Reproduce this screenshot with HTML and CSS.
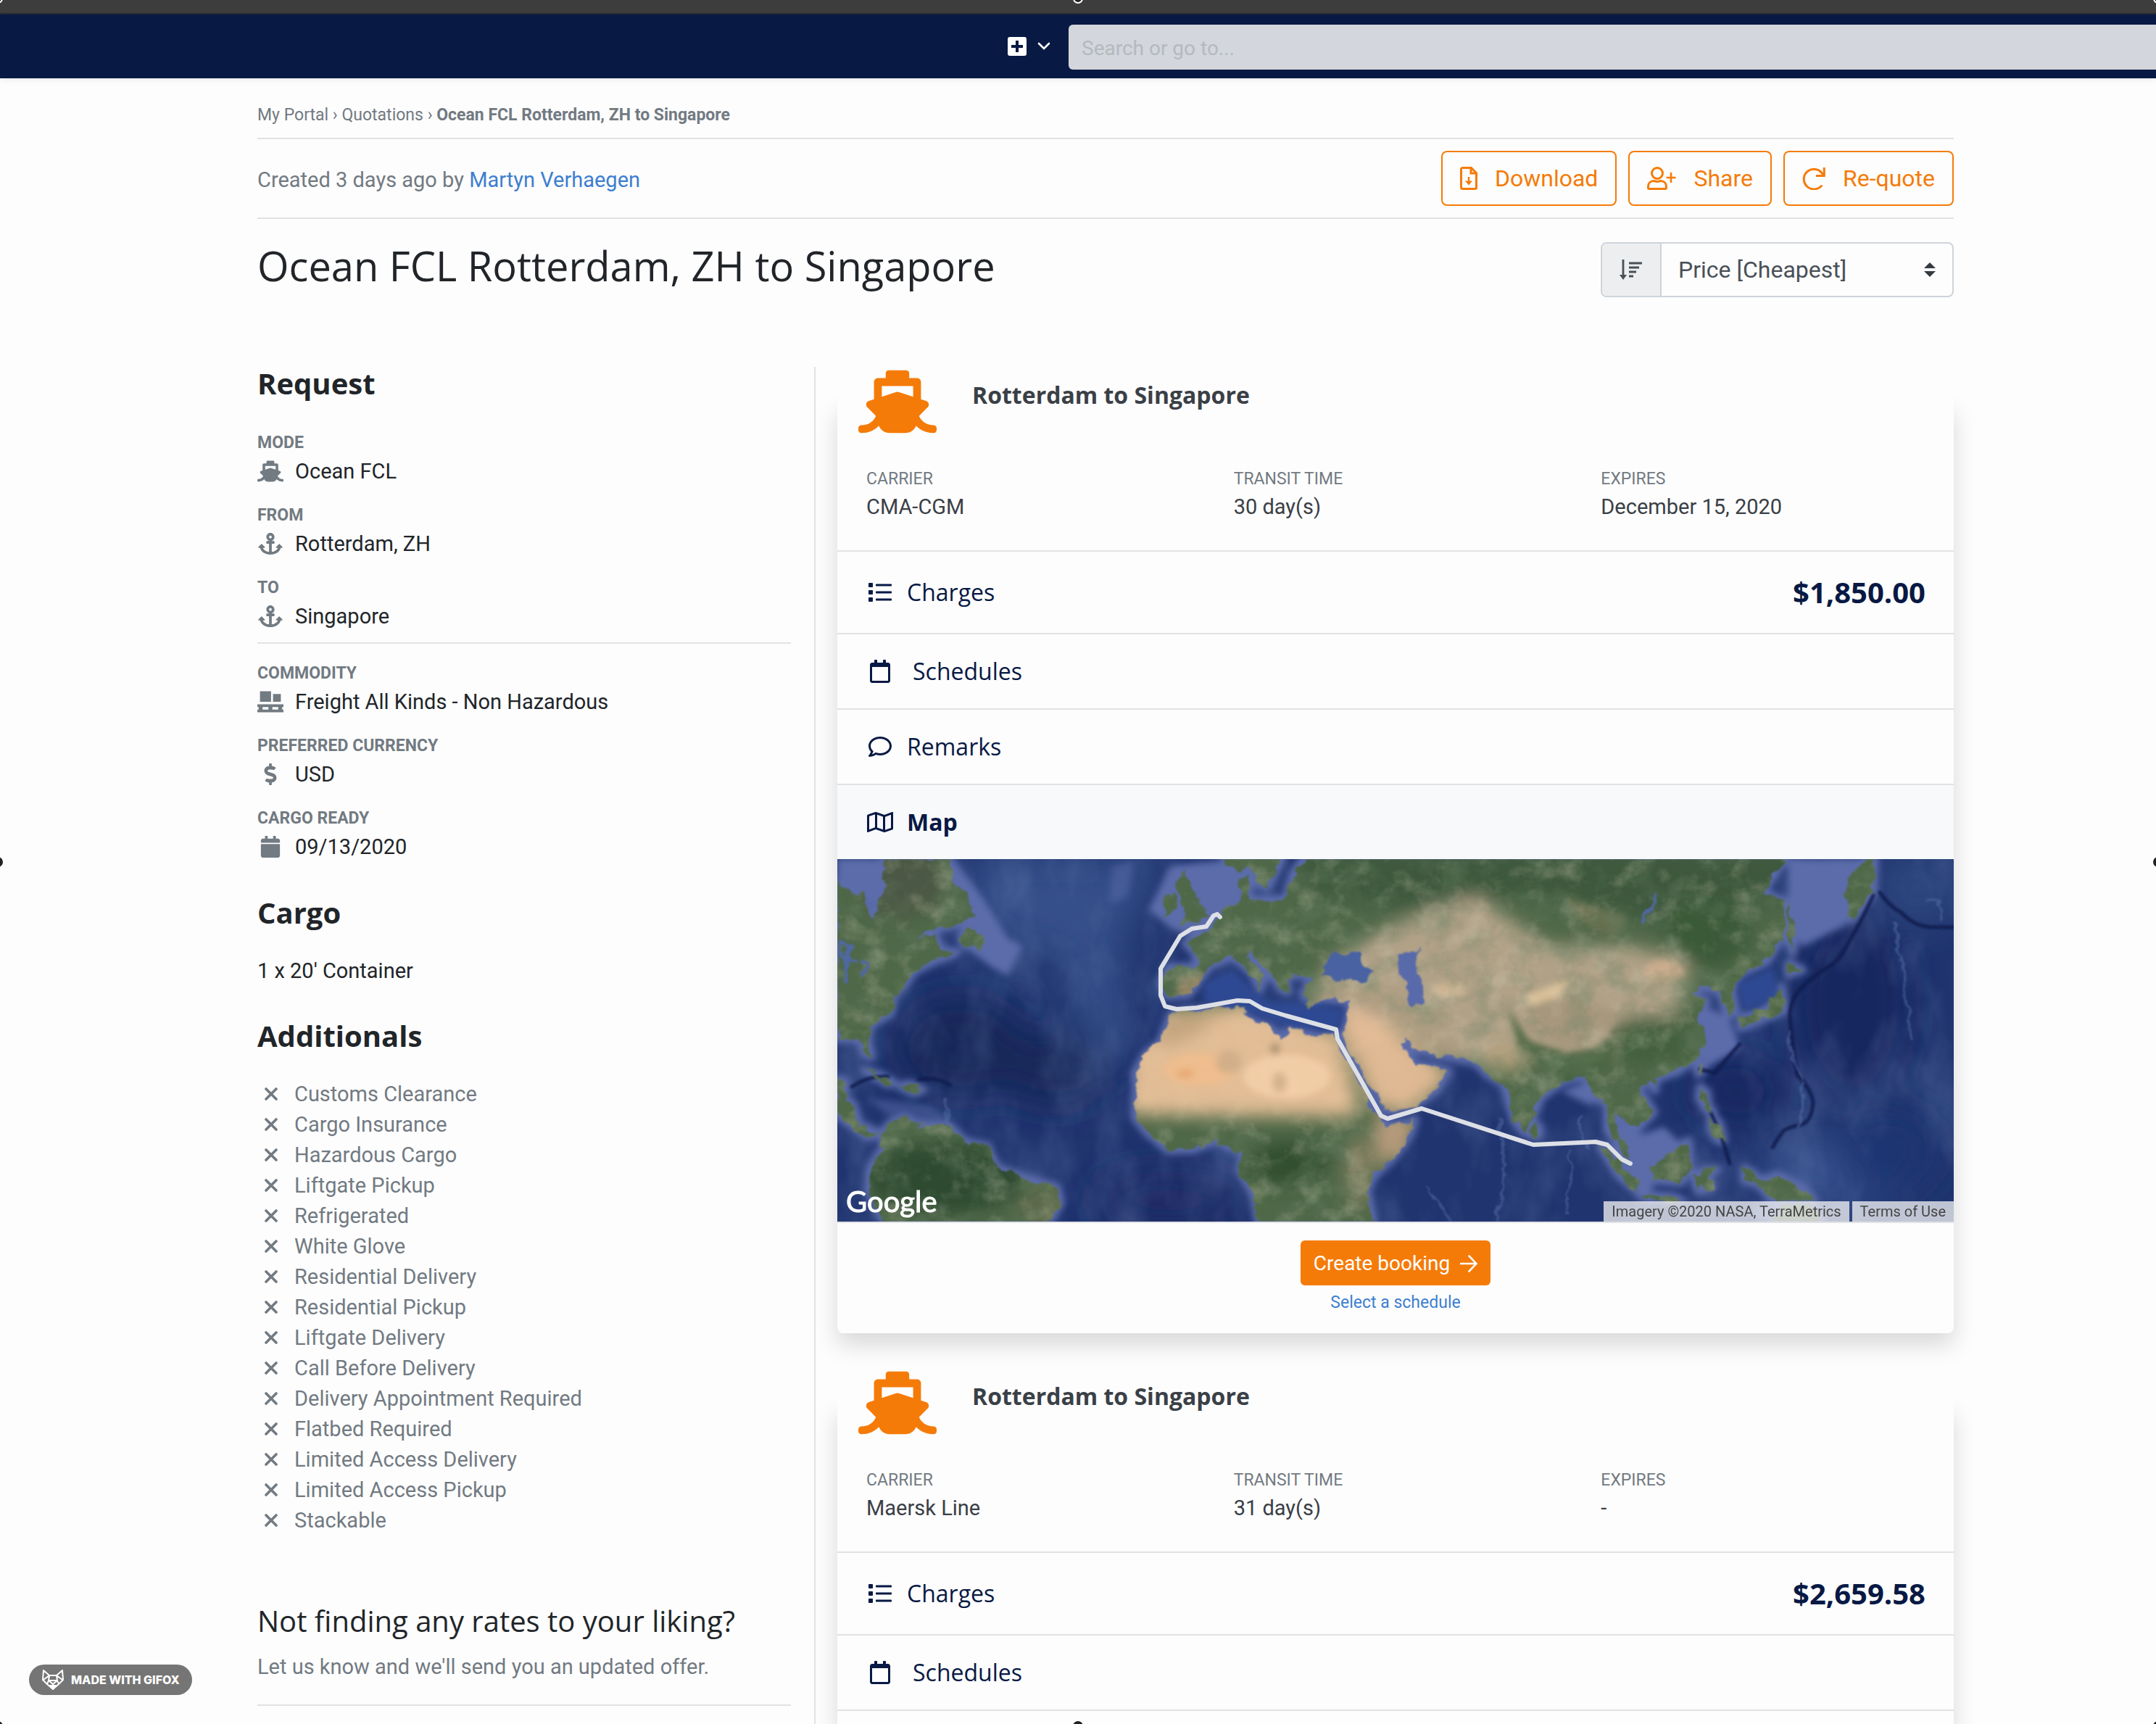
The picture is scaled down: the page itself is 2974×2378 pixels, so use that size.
FILE: index.html
```html
<!DOCTYPE html>
<html lang="en">
<head>
<meta charset="utf-8">
<title>Ocean FCL Rotterdam, ZH to Singapore</title>
<link rel="stylesheet" href="styles.css">
</head>
<body>
<svg class="sprite" aria-hidden="true">
  <symbol id="ship" viewBox="0 0 640 512"><path d="M496.616 372.639l70.012-70.012c16.899-16.9 9.942-45.771-12.836-53.092L512 236.102V96c0-17.673-14.327-32-32-32h-64V24c0-13.255-10.745-24-24-24H248c-13.255 0-24 10.745-24 24v40h-64c-17.673 0-32 14.327-32 32v140.102l-41.792 13.433c-22.753 7.313-29.754 36.173-12.836 53.092l70.012 70.012C125.828 416.287 85.587 448 24 448c-13.255 0-24 10.745-24 24v16c0 13.255 10.745 24 24 24 61.023 0 107.499-20.61 143.258-59.396C181.677 487.432 216.021 512 256 512h128c39.979 0 74.323-24.568 88.742-59.396C508.495 491.384 554.968 512 616 512c13.255 0 24-10.745 24-24v-16c0-13.255-10.745-24-24-24-60.817 0-101.542-31.001-119.384-75.361zM192 128h256v87.531l-118.208-37.995a31.995 31.995 0 0 0-19.584 0L192 215.531V128z"/></symbol>
  <symbol id="anchor" viewBox="0 0 576 512"><path d="M12.971 352h32.394C67.172 454.735 181.944 512 288 512c106.229 0 220.853-57.38 242.635-160h32.394c10.691 0 16.045-12.926 8.485-20.485l-67.029-67.029c-4.686-4.686-12.284-4.686-16.971 0l-67.029 67.029c-7.56 7.56-2.206 20.485 8.485 20.485h35.146c-20.29 54.317-84.963 86.588-144.117 94.015V256h52c6.627 0 12-5.373 12-12v-40c0-6.627-5.373-12-12-12h-52v-5.47c37.281-13.226 64-48.808 63.998-90.528C383.994 43.009 341.012 0 288 0c-53.001 0-95.982 42.967-95.998 95.965-.013 41.727 26.706 77.31 63.998 90.565V192h-52c-6.627 0-12 5.373-12 12v40c0 6.627 5.373 12 12 12h52v190.015c-58.936-7.399-123.82-39.679-144.117-94.015h35.146c10.691 0 16.045-12.926 8.485-20.485l-67.029-67.029c-4.686-4.686-12.284-4.686-16.971 0L4.485 331.515C-3.074 339.074 2.28 352 12.971 352zM288 64c17.645 0 32 14.355 32 32s-14.355 32-32 32-32-14.355-32-32 14.355-32 32-32z"/></symbol>
  <symbol id="pallet" viewBox="0 0 640 512"><path d="M64 0h272v256H64zM384 64h192v192H384zM0 320h640v64H0zM0 448h640v64H0zM32 370h96v90H32zM272 370h96v90h-96zM512 370h96v90h-96z"/></symbol>
  <symbol id="dollar" viewBox="0 0 288 512"><path d="M209.2 233.4l-108-31.6C88.7 198.2 80 186.5 80 173.5c0-16.300 13.200-29.500 29.500-29.500h66.300c12.200 0 24.200 3.700 34.200 10.500 6.100 4.100 14.300 3.100 19.500-2l34.800-34c7.100-6.900 6.100-18.400-1.800-24.500C238 74.800 207.400 64.100 176 64V16c0-8.800-7.200-16-16-16h-32c-8.800 0-16 7.200-16 16v48h-2.500C45.800 64-5.400 118.700.5 183.600c4.200 46.100 39.400 83.600 83.800 96.600l102.500 30c12.500 3.700 21.200 15.300 21.200 28.300 0 16.300-13.200 29.500-29.500 29.500h-66.300C100 368 88 364.300 78 357.500c-6.100-4.100-14.300-3.100-19.500 2l-34.800 34c-7.100 6.900-6.100 18.400 1.800 24.500 24.500 19.200 55.100 29.900 86.500 30v48c0 8.800 7.200 16 16 16h32c8.800 0 16-7.200 16-16v-48.200c46.600-.9 90.300-28.600 105.700-72.700 21.500-61.600-14.600-124.800-72.500-141.700z"/></symbol>
  <symbol id="calendar-solid" viewBox="0 0 448 512"><path d="M12 192h424c6.600 0 12 5.400 12 12v260c0 26.500-21.500 48-48 48H48c-26.500 0-48-21.500-48-48V204c0-6.600 5.400-12 12-12zm436-44v-36c0-26.500-21.500-48-48-48h-48V12c0-6.600-5.400-12-12-12h-40c-6.600 0-12 5.400-12 12v52H160V12c0-6.600-5.400-12-12-12h-40c-6.600 0-12 5.400-12 12v52H48C21.500 64 0 85.500 0 112v36c0 6.600 5.400 12 12 12h424c6.600 0 12-5.400 12-12z"/></symbol>
  <symbol id="calendar" viewBox="0 0 448 512"><path d="M400 64h-48V12c0-6.600-5.400-12-12-12h-40c-6.600 0-12 5.400-12 12v52H160V12c0-6.600-5.400-12-12-12h-40c-6.600 0-12 5.400-12 12v52H48C21.500 64 0 85.500 0 112v352c0 26.500 21.500 48 48 48h352c26.500 0 48-21.500 48-48V112c0-26.500-21.500-48-48-48zm-6 400H54c-3.300 0-6-2.700-6-6V160h352v298c0 3.300-2.700 6-6 6z"/></symbol>
  <symbol id="list" viewBox="0 0 512 512"><path d="M16 48h64c9 0 16 7 16 16v64c0 9-7 16-16 16H16c-9 0-16-7-16-16V64c0-9 7-16 16-16zM16 208h64c9 0 16 7 16 16v64c0 9-7 16-16 16H16c-9 0-16-7-16-16v-64c0-9 7-16 16-16zM16 368h64c9 0 16 7 16 16v64c0 9-7 16-16 16H16c-9 0-16-7-16-16v-64c0-9 7-16 16-16zM176 72h320c9 0 16 7 16 16v16c0 9-7 16-16 16H176c-9 0-16-7-16-16V88c0-9 7-16 16-16zM176 232h320c9 0 16 7 16 16v16c0 9-7 16-16 16H176c-9 0-16-7-16-16v-16c0-9 7-16 16-16zM176 392h320c9 0 16 7 16 16v16c0 9-7 16-16 16H176c-9 0-16-7-16-16v-16c0-9 7-16 16-16z"/></symbol>
  <symbol id="comment" viewBox="0 0 512 512"><path d="M256 32C114.600 32 0 125.100 0 240c0 47.600 19.900 91.200 52.900 126.300C38 405.700 7 439.100 6.500 439.500c-6.600 7-8.400 17.200-4.600 26S14.400 480 24 480c61.500 0 110-25.700 139.100-46.300C192 442.800 223.200 448 256 448c141.400 0 256-93.100 256-208S397.400 32 256 32zm0 368c-26.700 0-53.100-4.100-78.400-12.100l-22.700-7.200-19.500 13.800c-14.300 10.100-33.900 21.400-57.500 29 7.300-12.100 14.400-25.700 19.900-40.200l10.600-28.100-20.600-21.800C69.700 314.100 48 282.200 48 240c0-88.200 93.300-160 208-160s208 71.800 208 160-93.300 160-208 160z"/></symbol>
  <symbol id="map" viewBox="0 0 576 512"><path d="M560.02 32c-1.960 0-3.980.37-5.960 1.160L384.010 96H384L212 35.280A64.252 64.252 0 0 0 191.760 32c-6.690 0-13.370 1.050-19.810 3.140L20.120 87.950A32.006 32.006 0 0 0 0 117.660v346.320C0 473.170 7.530 480 15.990 480c1.960 0 3.970-.37 5.960-1.160L192 416l172 60.710a63.980 63.980 0 0 0 40.050.15l151.830-52.810A31.996 31.996 0 0 0 576 394.340V48.020c0-9.190-7.530-16.020-15.980-16.020zM224 90.420l128 45.190v285.970l-128-45.190V90.420zM48 418.050V129.070l128-44.530v286.200l-.64.23L48 418.050zm480-35.130l-128 44.530V141.260l.64-.24L528 93.950v288.970z"/></symbol>
  <symbol id="cross" viewBox="0 0 20 18"><path d="M3 2l14 14M17 2L3 16" fill="none" stroke="currentColor" stroke-width="3.600" stroke-linecap="round"/></symbol>
</svg>

<div class="frame-bar"></div>
<header class="navbar">
  <button class="add-button" type="button" aria-label="Create new">
    <svg width="26" height="26" viewBox="0 0 26 26"><rect width="26" height="26" rx="3" fill="#fff"/><path d="M13 5v16M5 13h16" stroke="#081944" stroke-width="4"/></svg>
    <svg width="18" height="12" viewBox="0 0 18 12"><path d="M2 2l7 7 7-7" fill="none" stroke="#fff" stroke-width="2.600" stroke-linecap="round"/></svg>
  </button>
  <input class="search" type="search" placeholder="Search or go to..." aria-label="Search or go to">
</header>

<div class="page">
  <nav class="breadcrumb" aria-label="Breadcrumb"><a href="#">My Portal</a> › <a href="#">Quotations</a> › <strong>Ocean FCL Rotterdam, ZH to Singapore</strong></nav>
  <div class="toolbar">
    <p class="created">Created 3 days ago by <a href="#">Martyn Verhaegen</a></p>
    <div class="actions">
      <button class="btn" type="button">
        <svg width="24" height="32" viewBox="0 0 24 32" fill="none" stroke="currentColor" stroke-width="3"><path d="M3.500 1.500h12L22.500 8.500v20a2 2 0 0 1-2 2h-17a2 2 0 0 1-2-2v-25a2 2 0 0 1 2-2zM15 2v7h7"/><path d="M12 14v8" stroke-width="2.400"/><path d="M7 19.500h10L12 25.500z" fill="currentColor" stroke="none"/></svg>
        Download</button>
      <button class="btn" type="button">
        <svg width="40" height="32" viewBox="0 0 40 32" fill="none" stroke="currentColor" stroke-width="3"><circle cx="14" cy="9" r="7.500"/><path d="M9.500 19.500c2 .8 3 1 4.500 1s2.500-.2 4.500-1c5 0 8 3.500 8 8v1.500a1.500 1.500 0 0 1-1.500 1.500H3a1.500 1.500 0 0 1-1.500-1.500v-1.500c0-4.500 3-8 8-8z"/><path d="M33 8v14M26.500 15h13" stroke-width="2.600"/></svg>
        Share</button>
      <button class="btn" type="button">
        <svg width="32" height="32" viewBox="0 0 32 32" fill="none" stroke="currentColor" stroke-width="3"><path d="M26.500 26.500A14 13.800 0 1 1 28.500 10.500" stroke-linecap="round"/><path d="M30.300 1v11.500H19"/></svg>
        Re-quote</button>
    </div>
  </div>
  <div class="title-row">
    <h1>Ocean FCL Rotterdam, ZH to Singapore</h1>
    <div class="sort">
      <label class="sort-icon" for="sort" aria-label="Sort by">
        <svg width="32" height="28" viewBox="0 0 32 28" fill="none" stroke="currentColor" stroke-width="2.800"><path d="M5 0v24"/><path d="M0 21h10l-5 7z" fill="currentColor" stroke="none"/><path d="M13 5h18M13 11h14M13 17h10M13 23h6"/></svg>
      </label>
      <select id="sort"><option>Price [Cheapest]</option></select>
      <svg class="sort-arrows" width="16" height="20" viewBox="0 0 16 20"><path d="M8 0l8 8H0zM8 20l8-8H0z" fill="#343a40"/></svg>
    </div>
  </div>

  <div class="columns">
    <aside class="sidebar">
      <h2>Request</h2>
      <dl class="facts">
        <dt>Mode</dt><dd><svg class="fact-icon"><use href="#ship"/></svg>Ocean FCL</dd>
        <dt>From</dt><dd><svg class="fact-icon"><use href="#anchor"/></svg>Rotterdam, ZH</dd>
        <dt>To</dt><dd><svg class="fact-icon"><use href="#anchor"/></svg>Singapore</dd>
      </dl>
      <dl class="facts facts-ruled">
        <dt>Commodity</dt><dd><svg class="fact-icon"><use href="#pallet"/></svg>Freight All Kinds - Non Hazardous</dd>
        <dt>Preferred currency</dt><dd><svg class="fact-icon"><use href="#dollar"/></svg>USD</dd>
        <dt>Cargo ready</dt><dd><svg class="fact-icon"><use href="#calendar-solid"/></svg>09/13/2020</dd>
      </dl>
      <h2>Cargo</h2>
      <p class="cargo">1 x 20' Container</p>
      <h2>Additionals</h2>
      <ul class="extras">
        <li><svg><use href="#cross"/></svg>Customs Clearance</li>
        <li><svg><use href="#cross"/></svg>Cargo Insurance</li>
        <li><svg><use href="#cross"/></svg>Hazardous Cargo</li>
        <li><svg><use href="#cross"/></svg>Liftgate Pickup</li>
        <li><svg><use href="#cross"/></svg>Refrigerated</li>
        <li><svg><use href="#cross"/></svg>White Glove</li>
        <li><svg><use href="#cross"/></svg>Residential Delivery</li>
        <li><svg><use href="#cross"/></svg>Residential Pickup</li>
        <li><svg><use href="#cross"/></svg>Liftgate Delivery</li>
        <li><svg><use href="#cross"/></svg>Call Before Delivery</li>
        <li><svg><use href="#cross"/></svg>Delivery Appointment Required</li>
        <li><svg><use href="#cross"/></svg>Flatbed Required</li>
        <li><svg><use href="#cross"/></svg>Limited Access Delivery</li>
        <li><svg><use href="#cross"/></svg>Limited Access Pickup</li>
        <li><svg><use href="#cross"/></svg>Stackable</li>
      </ul>
      <div class="feedback">
        <h3>Not finding any rates to your liking?</h3>
        <p>Let us know and we'll send you an updated offer.</p>
      </div>
    </aside>

    <main class="quotes">
      <article class="card">
        <header class="card-head"><svg class="card-ship"><use href="#ship"/></svg><h4>Rotterdam to Singapore</h4></header>
        <dl class="meta">
          <div><dt>Carrier</dt><dd>CMA-CGM</dd></div>
          <div><dt>Transit time</dt><dd>30 day(s)</dd></div>
          <div><dt>Expires</dt><dd>December 15, 2020</dd></div>
        </dl>
        <button class="row row-price" type="button"><svg class="row-icon"><use href="#list"/></svg><span>Charges</span><strong class="price">$1,850.00</strong></button>
        <button class="row row-wide" type="button"><svg class="row-icon"><use href="#calendar"/></svg><span>Schedules</span></button>
        <button class="row" type="button"><svg class="row-icon"><use href="#comment"/></svg><span>Remarks</span></button>
        <button class="row row-open" type="button"><svg class="row-icon"><use href="#map"/></svg><span>Map</span></button>
        <div class="map">
          <svg class="map-art" viewBox="0 0 1540 500" preserveAspectRatio="xMidYMid slice" role="img" aria-label="Route from Rotterdam to Singapore">
            <defs>
              <filter id="coast" x="0" y="0" width="100%" height="100%" filterUnits="userSpaceOnUse"><feTurbulence type="fractalNoise" baseFrequency="0.06" numOctaves="3" seed="3"/><feDisplacementMap in="SourceGraphic" scale="16" xChannelSelector="R" yChannelSelector="G"/><feGaussianBlur stdDeviation="1"/></filter>
              <filter id="b2" x="-10%" y="-10%" width="120%" height="120%"><feGaussianBlur stdDeviation="1.400"/></filter>
              <filter id="b6" x="-20%" y="-20%" width="140%" height="140%"><feGaussianBlur stdDeviation="5"/></filter>
              <filter id="b14" x="-40%" y="-40%" width="180%" height="180%"><feGaussianBlur stdDeviation="12"/></filter>
              <filter id="b26" x="-60%" y="-60%" width="220%" height="220%"><feGaussianBlur stdDeviation="26"/></filter>
              <filter id="grain" x="0" y="0" width="100%" height="100%"><feTurbulence type="fractalNoise" baseFrequency="0.022 0.026" numOctaves="5" seed="4"/><feColorMatrix values="0 0 0 0 .14  0 0 0 0 .22  0 0 0 0 .13  2.600 0 0 0 -1.150"/></filter>
              <filter id="glow" x="0" y="0" width="100%" height="100%"><feTurbulence type="fractalNoise" baseFrequency="0.03 0.034" numOctaves="5" seed="11"/><feColorMatrix values="0 0 0 0 .74  0 0 0 0 .67  0 0 0 0 .52  0 2.400 0 0 -1.150"/></filter>
              <filter id="swell" x="0" y="0" width="100%" height="100%"><feTurbulence type="fractalNoise" baseFrequency="0.014 0.008" numOctaves="4" seed="7"/><feColorMatrix values="0 0 0 0 .25  0 0 0 0 .35  0 0 0 0 .6  1.800 0 0 0 -.75"/></filter>
              <g id="land-shapes">
                <path d="M63 0l2 16v23l-10 14-5 31-10-18-3-20H17L0 33v215h30l7 21 10 4-5-24 3-20 28-16 5-24 15-16 11-17 25-13 36-14-21-3-10-23-25 10 15-15 31-5 20-7 13-10-5-20-21-23-7-33z"/>
                <path d="M178 93l12 3 13 17-3 11-25-5-5-10z"/>
                <path d="M0 303l12 4-2 24 12 8 8 27 23 10 10 3-21 5-25-18L0 353z"/>
                <path d="M37 291l20 6 21 11-8 3-20-12zM86 313l14-3 19 8-14 5z"/>
                <path d="M63 383l7-17 23-10 16 10 46 2 20 21 31 7 15 30 36 13 46 14 5 20-16 27v20H70l-7-20-21-44 3-30 18-27z"/>
                <path d="M461 213l15-4 87-6 2 16 28 10 21 17 10-15 41 12 23-2 2 18 26 44 25 46 16 17 29-2 11-5-6 20-25 34-25 23-10 20 8 44v20H581v-20l-6-37-20-34 5-23-23-10-15-7-31 12h-35l-26-22-20-23 2-40-2-20 15-27 20-16z"/>
                <path d="M456 149h40l-2-20-13-13 21-10 25-20 5-17 21-10 2-30 13-6v33h51l10-37 15-19v-20h663v20l-31 46 31 13-3 47-23 37-35 16-11 24 5 26-12 7-10-33-26-7-13 13 21 7-13 17 13 30-13 30-28 20-31 10v16l-10-15-13 12 21 33-23 24-31-24 5 37 16 23-15-10-16-26v-37l-20-7-11-30-30 7-31 23-10 27-10 23-16-16-15-54-20-10-21-20-56-10-25-6-11-15-7 5 18 30 23 3 23 7-16 26-30 20-31 10-9-2-21-36-30-47-8-23 10-44-43-3-15 12-8-20 13-22-26-5-10 5 3 20-10-4-15-23-26-30-5 7 25 27-10 23-7-23-28-27-31 13-20 27-11 13-30 2-8-18z"/>
                <path d="M476 16l13 13 7 27 16 17-10 10-31 8 10-15-5-27-10-13zM451 53l17-5 3 18-20 15zM535-20v20l12 16 21-5 10 22 15 6 21-39v-20z"/>
                <path d="M1302 176l5 33-36 14-25 10v-14l35-13zM1312 143l20 10-20 6zM1312 59l10 44-5 26-8-30zM1419 0h12l-2 46-30 37-8-34 8-26z"/>
                <path d="M1190 283l4 8-6 6-2-8zM1190 314l10 8 1 16 8 12-12-5-9-16zM1205 356l12 8 6 25-10-2-9-14z"/>
                <path d="M1052 396l15 7 36 40v15l-26-22zM1077 386l12 8 6 20-12-8zM1123 426l41-33 10-4 3 37-13 20-36-3zM1106 462l48 4 12 6-50-3zM1184 436l10-6 20-2-16 10 10 12-8 6-6-10-5 12-5-10zM1251 426l14 8 8 10 24-8 35 17 16 18h-57l-20-22-20-6z"/>
                <ellipse cx="963" cy="375" rx="6" ry="9"/>
                <path d="M1290 500l14-22 14 2 22-6 18 26z"/>
              </g>
              <mask id="land-mask" maskUnits="userSpaceOnUse" x="0" y="-20" width="1540" height="560"><use href="#land-shapes" fill="#fff" filter="url(#coast)"/></mask>
            </defs>
            <rect width="1540" height="500" fill="#20346f"/>
            <g filter="url(#b26)">
              <path d="M170 0h280l-60 110 10 160h-60l-20-130-120-40z" fill="#35508a"/>
              <ellipse cx="170" cy="260" rx="90" ry="70" fill="#152559"/>
              <ellipse cx="300" cy="290" rx="70" ry="50" fill="#162759"/>
              <ellipse cx="460" cy="470" rx="110" ry="40" fill="#1a2c64"/>
              <ellipse cx="1400" cy="200" rx="80" ry="130" fill="#14265f"/>
              <ellipse cx="1240" cy="320" rx="60" ry="50" fill="#152760"/>
              <ellipse cx="1380" cy="430" rx="110" ry="50" fill="#34508c"/>
              <ellipse cx="1490" cy="40" rx="60" ry="50" fill="#2e467f"/>
              <ellipse cx="1450" cy="400" rx="70" ry="60" fill="#1f3672"/>
            </g>
            <rect width="1540" height="500" filter="url(#swell)" opacity=".3"/>
            <g fill="#5b6cab" stroke="#5b6cab" stroke-linejoin="round" filter="url(#b6)">
              <use href="#land-shapes" stroke-width="12"/>
              <path d="M0 0h60v60H0zM160 0l45 60 30 50 20 10-20 40-20-10-40-30zM430 70l30-60 100-10v60l-60 50-40-15zM1312 0h120l-40 90-60 30-20-30zM1190 200l40 20 15 40-50 30zM1070 360l40 20 30-10 20 20-45 80-30-60zM1000 320l30-10 10 30z"/>
              <path d="M380 10l30-8-10 50-25 10z" opacity=".5"/>
              <path d="M1260 480l60-10 40 30h-90z" opacity=".7"/>
              <path d="M40 330l90 10 30 30-80-10z" opacity=".5"/>
            </g>
            <g filter="url(#b6)"><path d="M505 170l40-18 50 45h60l45 10-10 30-70-5-55-20-60-15zM1240 170l50-20 10 40-50 20z" fill="#2f4a93"/></g>
            <g fill="none" stroke="#0c1a4c" stroke-width="5" stroke-linecap="round" stroke-linejoin="round" filter="url(#b2)">
              <path d="M1429 50Q1414 84 1394 116Q1386 134 1372 146Q1350 158 1334 174Q1316 188 1314 214Q1316 250 1324 298Q1344 318 1346 336Q1344 362 1330 366Q1312 370 1306 374Q1296 386 1290 398M1438 46Q1452 66 1468 74Q1484 92 1508 94h32M1190 290l20 5 35-40M1205 350l14 30 12 40M20 314q24-16 50-14M112 304q28-4 44 8" opacity=".85"/>
            </g>
            <g fill="none" stroke="#5b75b0" stroke-width="4" opacity=".45" filter="url(#coast)">
              <path d="M1458 90l14 70 6 60 4 30M1500 56q24-10 22 30M1310 240l18 60 4 40-6 30M916 360l4 90-10 50M1012 400l-4 90M810 452l20 20 16 30M148 330l6 40M1026 350q-8 30 10 50"/>
            </g>
            <g mask="url(#land-mask)">
              <rect width="1540" height="500" fill="#4f6848"/>
              <g filter="url(#b14)">
                <path d="M640-10h700v60l-200 40-180-40-200 20-120-30z" fill="#3c593d"/>
                <path d="M770 90l110-40 100 70h110l90 20-20 70-60 20-40 50-110-10-60 20-110-30-40-60-80-20 20-40z" fill="#b0a187"/>
                <path d="M640 180h130l90 70-20 30-80-30-60-10z" fill="#ad9d82"/>
                <ellipse cx="150" cy="440" rx="110" ry="50" fill="#2f4b31"/>
                <ellipse cx="620" cy="420" rx="60" ry="30" fill="#31502f"/>
                <ellipse cx="300" cy="480" rx="50" ry="30" fill="#5d6a4b"/>
                <ellipse cx="90" cy="30" rx="60" ry="50" fill="#4c5945"/>
                <ellipse cx="720" cy="430" rx="18" ry="50" fill="#837f60"/>
                <ellipse cx="1120" cy="250" rx="60" ry="35" fill="#42603d"/>
                <ellipse cx="1200" cy="100" rx="60" ry="50" fill="#3a5a38"/>
                <ellipse cx="920" cy="275" rx="30" ry="20" fill="#b3a07c"/>
              </g>
              <g filter="url(#b6)">
                <path d="M945 190l70-28-20 30-40 14z" fill="#d8bf98"/>
                <ellipse cx="845" cy="180" rx="24" ry="10" fill="#cdb491"/>
                <ellipse cx="1140" cy="155" rx="26" ry="16" fill="#cbab8b"/>
                <path d="M1000 50l30 40 40 20 20-30z" fill="#66704f"/>
                <path d="M925 205l30 45 50 18 40-8 30-30-6 60-60 20-70-50z" fill="#46613e" opacity=".8"/>
                <path d="M945 205l70-20 60 30-10 30-60 15-50-20z" fill="#a6977d"/>
                <path d="M470 160h40l-12 36-30-2z" fill="#8f8462"/>
              </g>
              <rect width="1540" height="500" filter="url(#grain)" opacity=".42"/>
              <rect width="1540" height="500" filter="url(#glow)" opacity=".28"/>
              <g filter="url(#b14)" opacity=".92">
                <path d="M400 215l170-15 120 40 30 100-10 16-310-4z" fill="#eec49c"/>
                <path d="M440 225l90-15-30 30-60 20z" fill="#c8a67f"/>
                <path d="M700 200l50 20 100 80-60 50-50-10-45-100z" fill="#ebc09a"/>
                <path d="M740 355h60l-10 50-50 20z" fill="#bf9f80"/>
              </g>
              <g filter="url(#b6)" opacity=".8">
                <ellipse cx="500" cy="290" rx="50" ry="22" fill="#f3bd8c"/>
                <ellipse cx="620" cy="300" rx="60" ry="30" fill="#f6d1ab"/>
                <ellipse cx="540" cy="280" rx="18" ry="16" fill="#cfac86"/>
                <ellipse cx="610" cy="308" rx="10" ry="14" fill="#d2b08a"/>
                <ellipse cx="604" cy="262" rx="6" ry="8" fill="#9d8767"/>
                <ellipse cx="480" cy="296" rx="12" ry="6" fill="#e8a36c"/>
              </g>
            </g>
            <g filter="url(#coast)">
              <path d="M680 129l20 4 21-9v15l20 20-15 10-36-3-25-3 5-20z" fill="#4a62a2"/>
              <path d="M776 129l26-6-5 20 12 30-2 26h-18l-3-26-12-24z" fill="#586aa9"/>
              <path d="M1126 48q2 18-18 38M0 128l8-16 10 14-8 16zM10 170l4-32h12M30 138l8 8v18" fill="none" stroke="#5067a0" stroke-width="5"/>
            </g>
            <path d="M528 80l-4-4-5 2-10 15-20 3-16 10-27 45v37l6 15 16 4 28-2 56-10 17 1 17 10 33 10 69 19 2 13 60 106 9 4 47-14 154 50 86-4 16 4 20 20 12 6" fill="none" stroke="#dde0e6" stroke-width="6" stroke-linejoin="round" stroke-linecap="round"/>
          </svg>
          <a class="map-logo" href="#">Google</a>
          <div class="map-credit"><span>Imagery ©2020 NASA, TerraMetrics</span><a href="#">Terms of Use</a></div>
        </div>
        <footer class="card-foot">
          <button class="book" type="button">Create booking
            <svg width="24" height="24" viewBox="0 0 24 24" fill="none" stroke="currentColor" stroke-width="2.600" stroke-linecap="round"><path d="M1 12h21M12.500 1.500L22.500 12l-10 10.500"/></svg></button>
          <a href="#">Select a schedule</a>
        </footer>
      </article>

      <article class="card card-last">
        <header class="card-head"><svg class="card-ship"><use href="#ship"/></svg><h4>Rotterdam to Singapore</h4></header>
        <dl class="meta">
          <div><dt>Carrier</dt><dd>Maersk Line</dd></div>
          <div><dt>Transit time</dt><dd>31 day(s)</dd></div>
          <div><dt>Expires</dt><dd>-</dd></div>
        </dl>
        <button class="row row-price" type="button"><svg class="row-icon"><use href="#list"/></svg><span>Charges</span><strong class="price">$2,659.58</strong></button>
        <button class="row row-wide row-end" type="button"><svg class="row-icon"><use href="#calendar"/></svg><span>Schedules</span></button>
      </article>
    </main>
  </div>
</div>

<a class="gifox" href="#">
  <svg width="32" height="28" viewBox="0 0 32 28" fill="none" stroke="#fff" stroke-width="2" stroke-linejoin="round"><path d="M3 1l8 7h10l8-7 1 13-6 6-8 7-8-7-6-6zM3 14l8-6-1 7 6 5 6-5-1-7 8 6M10 15l-2 5M22 15l2 5M10 15h12"/><path d="M12 22h8l-4 5z" fill="#fff"/></svg>
  MADE WITH GIFOX</a>
<i class="handle handle-top"></i><i class="handle handle-top handle-start"></i><i class="handle handle-top handle-end"></i>
<i class="handle handle-start"></i><i class="handle handle-end"></i>
<i class="handle handle-bottom"></i><i class="handle handle-bottom handle-start"></i><i class="handle handle-bottom handle-end"></i>
</body>
</html>
```
FILE: styles.css
```css
* { box-sizing: border-box; margin: 0; padding: 0; }

body {
  display: flex;
  flex-direction: column;
  position: relative;
  height: 100vh;
  overflow: hidden;
  background: #fdfdfd;
  color: #212529;
  font: 29px/42px Roboto, sans-serif;
}

a { color: #3d7fd0; text-decoration: none; }
button, input, select { font: inherit; color: inherit; border: 0; background: none; }
h1, h2, h3, h4 { font-family: "Open Sans", sans-serif; }
svg { flex: none; display: block; }
svg:not([fill]) { fill: currentColor; }
.sprite { position: absolute; width: 0; height: 0; }

/* Top bars */
.frame-bar { flex: none; height: 20px; background: #3d3d3d; border-bottom: 2px solid #262c33; }
.navbar { flex: none; display: flex; align-items: center; justify-content: flex-end; height: 88px; background: #081944; box-shadow: 0 2px 8px rgba(0, 0, 0, .08); }
.add-button { display: flex; align-items: center; gap: 15px; margin-right: 25px; }
.search { flex: 0 1 1500px; height: 62px; margin-top: 2px; padding: 2px 18px 0; border-radius: 6px 0 0 6px; background: #d3d6dc; font-size: 28px; }
.search::placeholder { color: #b5b9bf; opacity: 1; }

/* Page */
.page { flex: 1; display: flex; flex-direction: column; min-height: 0; padding: 0 279px 0 355px; }
.breadcrumb { height: 84px; padding-top: 33px; border-bottom: 2px solid #e0e2e4; color: #727a82; font-size: 23px; line-height: 36px; }
.breadcrumb a { color: inherit; }
.toolbar { display: flex; align-items: center; justify-content: space-between; height: 110px; border-bottom: 2px solid #e0e2e4; }
.created { padding-top: 4px; color: #727a82; }
.actions { display: flex; gap: 16px; }
.btn { display: flex; align-items: center; gap: 24px; height: 76px; padding: 0 24px; border: 2px solid #f57b08; border-radius: 8px; color: #f57b08; font-size: 32px; }

.title-row { display: flex; justify-content: space-between; align-items: flex-start; padding-top: 32px; height: 204px; }
h1 { font-size: 56px; line-height: 64px; font-weight: 400; }
.sort { position: relative; display: flex; width: 487px; height: 76px; border: 2px solid #ced4da; border-radius: 8px; background: #fdfdfd; }
.sort-icon { display: flex; align-items: center; justify-content: center; width: 82px; background: #eceeef; border-right: 2px solid #ced4da; border-radius: 6px 0 0 6px; color: #495057; }
.sort select { flex: 1; padding: 0 23px; appearance: none; font-size: 32px; color: #495057; }
.sort-arrows { position: absolute; right: 23px; top: 26px; }

.columns { flex: 1; display: grid; grid-template-columns: 1fr 2fr; gap: 30px; min-height: 0; }

/* Sidebar */
.sidebar { padding-right: 32px; border-right: 2px solid #e0e2e4; min-height: 0; }
h2 { font-size: 40px; line-height: 46px; font-weight: 700; }
.facts { padding-top: 41px; }
.facts dt { color: #727a82; font-size: 23px; font-weight: 700; line-height: 36px; text-transform: uppercase; }
.facts dd { display: flex; align-items: center; gap: 16px; height: 42px; margin-bottom: 22px; }
.facts dd:last-child { margin-bottom: 15px; }
.fact-icon { width: 36px; height: 30px; color: #727a82; }
.facts-ruled { margin-bottom: 47px; padding-top: 23px; border-top: 2px solid #e0e2e4; }
.cargo { padding: 36px 0 46px; }
.extras { list-style: none; padding: 36px 0 94px; color: #727a82; }
.extras li { display: flex; align-items: center; gap: 22px; padding-left: 9px; }
.extras svg { width: 20px; height: 18px; }
.feedback { padding-bottom: 31px; border-bottom: 2px solid #e0e2e4; }
.feedback h3 { font-size: 40px; line-height: 48px; font-weight: 400; }
.feedback p { padding-top: 18px; color: #727a82; }

/* Quote cards */
.quotes { display: flex; flex-direction: column; gap: 96px; padding-top: 48px; min-width: 0; }
.card { flex: none; border-radius: 8px; background: #fdfdfd; box-shadow: 0 16px 32px rgba(0, 0, 0, .15); }
.card-last { flex: 1 0 auto; border-radius: 8px 8px 0 0; }
.card-head { display: flex; gap: 49px; margin-top: -44px; padding-left: 29px; height: 88px; background: #fdfdfd; }
.card-ship { width: 108px; height: 88px; color: #f57b08; }
h4 { font-size: 32px; line-height: 70px; color: #3a4046; }
.meta { display: grid; grid-template-columns: repeat(3, 1fr); padding: 45px 10px 39px; color: #3a4046; }
.meta div { padding-left: 30px; }
.meta dt { font-size: 23px; line-height: 35px; color: #727a82; text-transform: uppercase; }
.row { display: flex; align-items: center; gap: 17px; width: 100%; height: 104px; padding: 0 39px; border-top: 2px solid #e0e2e4; color: #081944; font: 32px/48px "Open Sans", sans-serif; }
.row-icon { width: 40px; height: 32px; }
.row-price { height: 114px; }
.row-wide { gap: 25px; }
.row-open { background: #f8f9fb; font-weight: 700; }
.row-end { height: 106px; border-bottom: 2px solid #e0e2e4; }
.price { margin-left: auto; font-size: 40px; }

.map { position: relative; height: 500px; overflow: hidden; }
.map-art { width: 100%; height: 100%; }
.map-logo { position: absolute; left: 12px; bottom: 4px; color: #fff; font: 400 40px/48px Lato, sans-serif; -webkit-text-stroke: 1px #fff; }
.map-credit { position: absolute; right: 0; bottom: 0; display: flex; gap: 4px; font-size: 20px; line-height: 28px; }
.map-credit > * { padding: 0 11px; color: #444; background: rgba(245, 245, 245, .75); }

.card-foot { display: flex; flex-direction: column; align-items: center; gap: 6px; padding: 24px; border-top: 2px solid #e0e2e4; font-size: 23px; line-height: 36px; }
.book { display: flex; align-items: center; gap: 14px; height: 62px; padding: 2px 18px 0; border-radius: 6px; background: #f57b08; color: #fff; font-size: 28px; }

/* Recorder badge and frame handles */
.gifox { position: absolute; left: 40px; bottom: 40px; display: flex; align-items: center; gap: 9px; height: 42px; padding: 0 17px; border-radius: 21px; background: #757575; color: #fff; font: 800 16px/42px Inter, sans-serif; white-space: nowrap; }
.handle { position: absolute; left: calc(50% - 7px); top: calc(50% - 7px); width: 14px; height: 14px; border-radius: 50%; background: #222; }
.handle-top { top: -9px; border: 2px solid #fff; }
.handle-bottom { top: auto; bottom: -10px; }
.handle-start { left: -10px; }
.handle-end { left: auto; right: -10px; }
```
